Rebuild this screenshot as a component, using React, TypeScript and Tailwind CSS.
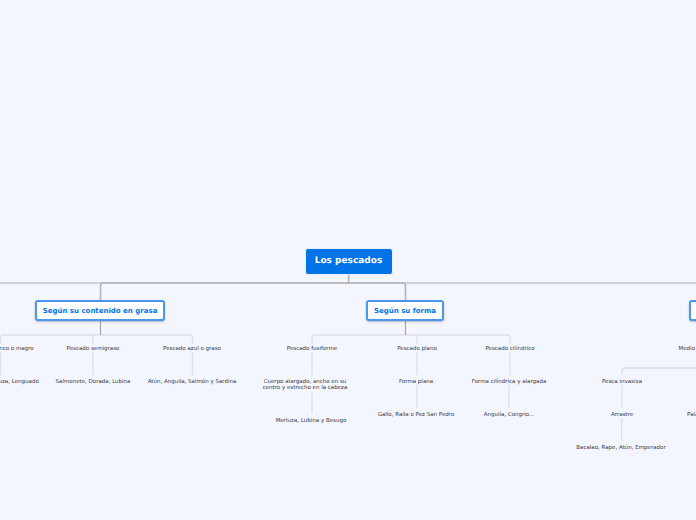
const leaves: { text: string; x: number; y: number }[] = [
  { text: 'Pescado blanco o magro', x: 0, y: 349 },
  { text: 'Pescado semigraso', x: 93, y: 349 },
  { text: 'Pescado azul o graso', x: 192, y: 349 },
  { text: 'Bacalao, Merluza, Lenguado', x: 0, y: 382 },
  { text: 'Salmonete, Dorada, Lubina', x: 93, y: 382 },
  { text: 'Atún, Anguila, Salmón y Sardina', x: 192, y: 382 },
  { text: 'Pescado fusiforme', x: 312, y: 349 },
  { text: 'Pescado plano', x: 417, y: 349 },
  { text: 'Pescado cilíndrico', x: 510, y: 349 },
  { text: 'Forma plana', x: 416, y: 382 },
  { text: 'Forma cilíndrica y alargada', x: 509, y: 382 },
  { text: 'Merluza, Lubina y Besugo', x: 311, y: 421 },
  { text: 'Gallo, Raíla o Pez San Pedro', x: 416, y: 415 },
  { text: 'Anguila, Congrio...', x: 509, y: 415 },
  { text: 'Medio de pesca', x: 700, y: 349 },
  { text: 'Pesca invasiva', x: 622, y: 382 },
  { text: 'Arrastre', x: 622, y: 415 },
  { text: 'Palangre', x: 699, y: 415 },
  { text: 'Bacalao, Rape, Atún, Emperador', x: 621, y: 448 },
];

// lines between the nodes of the map
const lines = [
  'M0.5 344V338Q0.5 335 3.5 335H189.5Q192.5 335 192.5 338V344',
  'M90 335Q93 335 93 338V344',
  'M93 352V375',
  'M192.5 352V375',
  'M0.5 352V375',
  'M312 344V338Q312 335 315 335H507Q510 335 510 338V344',
  'M414 335Q417 335 417 338V344',
  'M312 352V375',
  'M417 352V375',
  'M510 352V375',
  'M312 393V414',
  'M417 385V408',
  'M509 385V408',
  'M696 368H625Q622 368 622 371V375',
  'M622 385V408',
  'M621.5 418V441',
];

const Leaf = ({ text, x, y }: { text: string; x: number; y: number }) => (
  <div
    className="absolute -translate-x-1/2 -translate-y-1/2 whitespace-nowrap text-[5.5px] leading-[6px] text-[#38383e]"
    style={{ left: x, top: y }}
  >
    {text}
  </div>
);

const Branch = ({ text, left, width }: { text: string; left: number; width: number }) => (
  <div
    className="absolute top-[300px] flex h-[21px] items-center justify-center whitespace-nowrap rounded-[3px] border-2 border-[#4a97ec] bg-white pt-px text-[7px] font-bold text-[#0073e6] shadow-[0_1px_2px_rgba(0,0,0,0.25)]"
    style={{ left, width }}
  >
    {text}
  </div>
);

export default function App() {
  return (
    <div className="relative h-[520px] w-[696px] overflow-hidden bg-[#f3f6ff] font-['DejaVu_Sans',sans-serif] [text-rendering:geometricPrecision]">
      <svg className="absolute left-0 top-0" width="696" height="520" fill="none">
        <path d="M0 283H696" stroke="#d0d0d6" strokeWidth="1.8" />
        <path d="M348.7 274V283M100.5 300V286Q100.5 283 103.5 283H402.5Q405.5 283 405.5 286V300" stroke="#b4b4b6" strokeWidth="1.6" />
        {lines.map((d) => (
          <path key={d} d={d} stroke="#dedee6" strokeWidth="1.3" />
        ))}
        <path d="M100.5 321V335M405.5 321V335" stroke="#a6a6a8" strokeWidth="1.2" />
      </svg>

      <div className="absolute left-[304.5px] top-[247.5px] flex h-[27px] w-[88px] items-center justify-center rounded-[3px] border border-[#e8f0fb] bg-[#0073e6] pt-[2px] text-[9px] font-bold text-white">
        Los pescados
      </div>

      <Branch text="Según su contenido en grasa" left={35} width={130} />
      <Branch text="Según su forma" left={366} width={78} />
      <Branch text="" left={689} width={60} />

      {leaves.map((l) => (
        <Leaf key={l.text} {...l} />
      ))}
      <div className="absolute left-[262px] top-[379px] w-[86px] whitespace-nowrap text-center text-[5.5px] leading-[6px] text-[#38383e]">
        Cuerpo alargado, ancho en su
        <br />
        centro y estrecho en la cabeza
      </div>
    </div>
  );
}
